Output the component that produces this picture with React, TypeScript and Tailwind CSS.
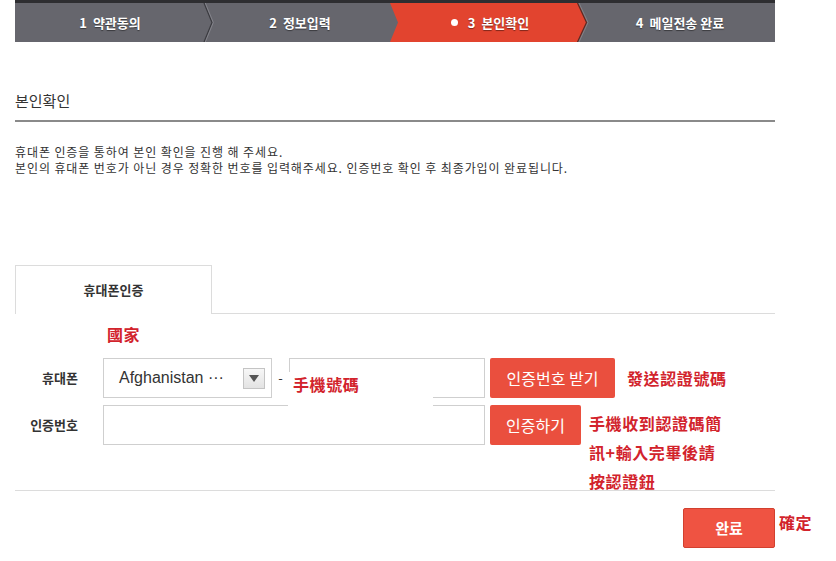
import React from "react";

const steps = [
  { no: "1", label: "약관동의" },
  { no: "2", label: "정보입력" },
  { no: "3", label: "본인확인", active: true },
  { no: "4", label: "메일전송 완료" },
];

const font = "font-['Noto_Sans_CJK_KR','Liberation_Sans',sans-serif]";
const note =
  "whitespace-nowrap font-['Noto_Sans_CJK_TC','Noto_Sans_CJK_KR',sans-serif] font-bold text-[16px] tracking-[0.6px] text-[#d2232c]";

function StepBar() {
  return (
    <div className="relative ml-[15px] h-[42px] w-[760px] border-t-[3px] border-[#2e2e31] bg-[#66666d]">
      <div className="absolute left-[375px] top-0 h-[39px] w-[197px] bg-[#e2442f] [clip-path:polygon(0_0,188px_0,197px_50%,188px_100%,0_100%,8px_50%)]" />
      <svg className="absolute left-0 top-0" width="760" height="39">
        <polyline points="189,0 197,19.5 189,39" fill="none" stroke="#3b3b40" strokeWidth="1.2" />
        <polyline points="190.3,0 198.3,19.5 190.3,39" fill="none" stroke="#8c8c93" strokeWidth="0.8" />
        <polyline points="562.5,0 571.5,19.5 562.5,39" fill="none" stroke="#5a2a24" strokeWidth="1.2" />
        <polyline points="564,0 573,19.5 564,39" fill="none" stroke="#8a8a90" strokeWidth="0.8" />
      </svg>
      <div className="relative flex h-full">
        {steps.map((s) => (
          <div
            key={s.no}
            className="flex w-[190px] items-center justify-center gap-[6px] text-[13px] font-bold text-white [text-shadow:0_1px_1px_rgba(0,0,0,0.45)]"
          >
            {s.active && <span className="mr-[4px] h-[7px] w-[7px] rounded-full bg-white" />}
            <span>{s.no}</span>
            <span>{s.label}</span>
          </div>
        ))}
      </div>
    </div>
  );
}

export default function App() {
  return (
    <div className={`relative h-[561px] w-[836px] overflow-hidden bg-white text-[#333] ${font}`}>
      <StepBar />

      <div className="ml-[15px] w-[760px]">
        <h2 className="mt-[48px] h-[30px] text-[15px] leading-[22px] text-[#333]">본인확인</h2>
        <div className="h-[2px] bg-[#8a8a8a]" />

        <div className="mt-[22px] text-[12px] leading-[16px] tracking-[0.9px] text-[#333]">
          <p>휴대폰 인증을 통하여 본인 확인을 진행 해 주세요.</p>
          <p>본인의 휴대폰 번호가 아닌 경우 정확한 번호를 입력해주세요. 인증번호 확인 후 최종가입이 완료됩니다.</p>
        </div>

        <div className="mt-[89px] flex h-[49px]">
          <div className="flex w-[197px] items-center justify-center border border-b-0 border-[#dcdcdc] text-[13px] font-bold text-[#333]">
            휴대폰인증
          </div>
          <div className="flex-1 border-b border-[#dcdcdc]" />
        </div>

        <div className="relative h-[177px] border-b border-[#dcdcdc]">
          <span className={`absolute left-[92px] top-[8px] ${note}`}>國家</span>

          <div className="absolute left-[273px] top-[58px] h-[34px] w-[145px] bg-white pl-[5px]">
            <span className={note}>手機號碼</span>
          </div>

          <div className="pt-[44px]">
            <div className="flex h-[40px] items-center">
              <label className="w-[63px] text-right text-[13px] font-bold text-[#333]">휴대폰</label>
              <div className="ml-[25px] flex h-[40px] w-[169px] items-center border border-[#cfcfcf] pl-[15px] pr-[6px]">
                <span className="flex-1 font-['Liberation_Sans',sans-serif] text-[16px] text-[#333]">Afghanistan ···</span>
                <span className="flex h-[21px] w-[22px] items-center justify-center border border-[#c4c4c4] bg-gradient-to-b from-[#f7f7f7] to-[#e3e3e3]">
                  <svg width="10" height="7" viewBox="0 0 10 7">
                    <polygon points="0,0 10,0 5,7" fill="#555" />
                  </svg>
                </span>
              </div>
              <span className="w-[17px] text-center text-[13px]">-</span>
              <div className="h-[40px] w-[196px] border border-[#cfcfcf]" />
              <button className="ml-[5px] h-[40px] w-[125px] rounded-[2px] bg-[#ea4f3e] text-[16px] text-white">
                인증번호 받기
              </button>
              <span className={`ml-[12px] ${note}`}>發送認證號碼</span>
            </div>

            <div className="mt-[7px] flex h-[40px] items-start">
              <label className="w-[63px] self-center text-right text-[13px] font-bold text-[#333]">인증번호</label>
              <div className="ml-[25px] h-[40px] w-[382px] border border-[#cfcfcf]" />
              <button className="ml-[5px] h-[40px] w-[91px] rounded-[2px] bg-[#ea4f3e] text-[16px] text-white">
                인증하기
              </button>
              <span className={`ml-[8px] mt-[4px] leading-[29px] ${note}`}>
                手機收到認證碼簡
                <br />
                訊+輸入完畢後請
                <br />
                按認證鈕
              </span>
            </div>
          </div>
        </div>

        <div className="mt-[17px] flex items-start">
          <button className="ml-[668px] h-[40px] w-[92px] shrink-0 rounded-[2px] border border-[#d2402f] bg-[#ef5342] text-[15px] font-bold text-white">
            완료
          </button>
          <span className={`ml-[4px] mt-[2px] ${note}`}>確定</span>
        </div>
      </div>
    </div>
  );
}
